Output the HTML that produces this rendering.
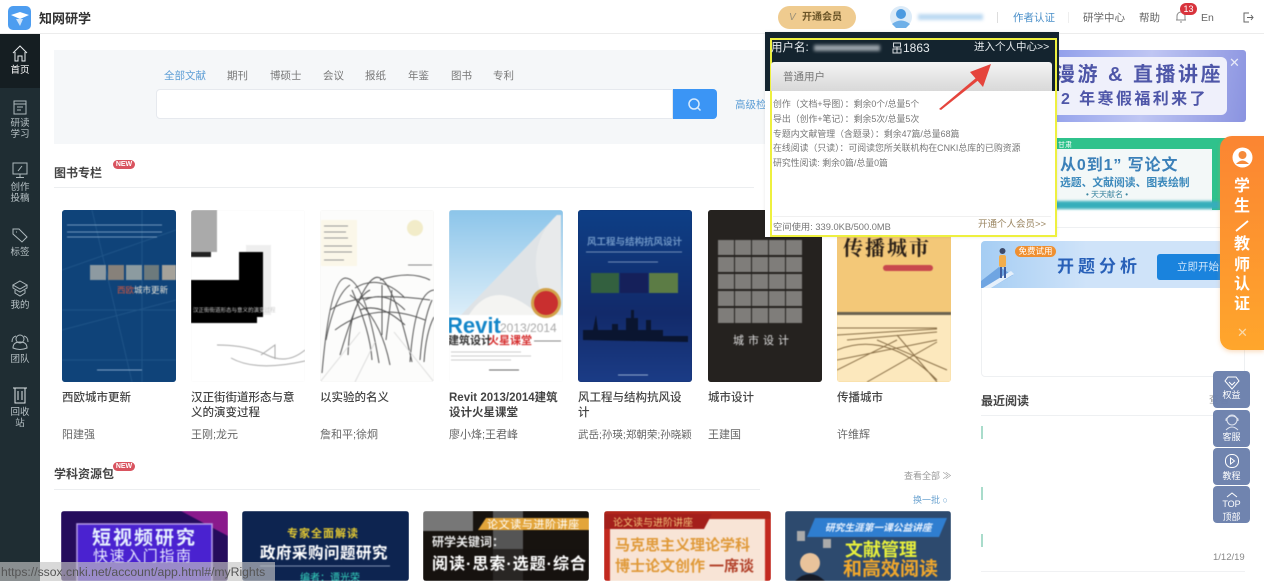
<!DOCTYPE html>
<html lang="zh"><head><meta charset="utf-8"><title>知网研学</title>
<style>
html,body{margin:0;padding:0}
body{width:1264px;height:581px;overflow:hidden;position:relative;background:#fff;font-family:"Liberation Sans","Noto Sans CJK SC",sans-serif;color:#333}
#w{position:absolute;left:0;top:0;width:1264px;height:581px;overflow:hidden;filter:blur(.35px)}
.a{position:absolute;white-space:nowrap}
.b{position:absolute;overflow:hidden;border-radius:3px}
.b svg{display:block;filter:blur(.4px)}
.t{font-size:11.5px;line-height:15px;color:#444;position:absolute;width:112px;font-weight:500}
.au{font-size:11px;line-height:14px;color:#666;position:absolute;white-space:nowrap}
.nav{position:absolute;left:0;width:40px;text-align:center;color:#b9c3c7;font-size:9.5px;line-height:11px}
.nav svg{display:block;margin:0 auto 3px}
.tab{position:absolute;top:69px;font-size:10.5px;line-height:14px;color:#777;white-space:nowrap}
.pl{position:absolute;left:773px;font-size:8.9px;line-height:12px;color:#777;white-space:nowrap}
.fb{position:absolute;left:1213px;width:37px;height:37px;background:#6c81ad;border-radius:4px;color:#fff;text-align:center;font-size:9px;line-height:11px;opacity:.97}
.fb svg{display:block;margin:0 auto}
.or{position:absolute;left:1233px;width:18px;text-align:center;color:#fff;font-size:16px;font-weight:700;line-height:18px}
.new{position:absolute;width:22px;height:9px;border-radius:6px;background:#d9535f;color:#fff;font-size:7px;font-weight:700;line-height:9px;text-align:center}
</style></head><body><div id="w">

<!-- header -->
<div class="a" style="left:0;top:0;width:1264px;height:34px;background:#fff;border-bottom:1px solid #ececec;box-sizing:border-box"></div>
<svg class="a" style="left:8px;top:6px" width="23" height="24" viewBox="0 0 23 24"><rect width="23" height="24" rx="5" fill="#4d9df0"/><path d="M3 9l9-3 9 3-9 4z" fill="#fff"/><path d="M8 13l4 7 3-7z" fill="#cfe4fa"/></svg>
<div class="a" style="left:39px;top:10px;font-size:13px;line-height:17px;font-weight:700;color:#333">知网研学</div>
<div class="a" style="left:778px;top:6px;width:78px;height:23px;border-radius:12px;background:#efcb8f"></div>
<div class="a" style="left:789px;top:11px;font-size:10px;line-height:13px;color:#9a9078;font-style:italic">V</div>
<div class="a" style="left:802px;top:11px;font-size:10px;line-height:13px;font-weight:700;color:#6b5528">开通会员</div>
<svg class="a" style="left:890px;top:6px" width="22" height="22"><circle cx="11" cy="11" r="11" fill="#dcebf8"/><circle cx="11" cy="8" r="5" fill="#4c9ae0"/><path d="M2 18q9-7 18 0l-4 4H6z" fill="#6fb0e8"/></svg>
<div class="a" style="left:918px;top:14px;width:65px;height:6px;background:#bcd9f2;filter:blur(1.5px)"></div>
<div class="a" style="left:997px;top:12px;width:1px;height:11px;background:#ddd"></div>
<div class="a" style="left:1013px;top:11px;font-size:10.5px;line-height:14px;color:#4a8fc9">作者认证</div>
<div class="a" style="left:1068px;top:12px;width:1px;height:11px;background:#eee"></div>
<div class="a" style="left:1083px;top:11px;font-size:10.5px;line-height:14px;color:#666">研学中心</div>
<div class="a" style="left:1139px;top:11px;font-size:10.5px;line-height:14px;color:#666">帮助</div>
<svg class="a" style="left:1175px;top:10px" width="12" height="13" fill="none" stroke="#888"><path d="M2 10V6a4 4 0 018 0v4M1 10h10M5 12h2"/></svg>
<div class="a" style="left:1180px;top:3px;width:17px;height:12px;border-radius:7px;background:#d8333c;color:#fff;font-size:9px;line-height:12px;text-align:center">13</div>
<div class="a" style="left:1201px;top:11px;font-size:10.5px;line-height:14px;color:#666">En</div>
<svg class="a" style="left:1242px;top:11px" width="12" height="13" fill="none" stroke="#666"><path d="M7 2H2v9h5M5 6.5h6M9 4l2 2.5L9 9"/></svg>

<!-- sidebar -->
<div class="a" style="left:0;top:34px;width:40px;height:547px;background:#1f2d33"></div>
<div class="a" style="left:0;top:34px;width:40px;height:54px;background:#151e22"></div>
<div class="nav" style="top:45px;color:#fff"><svg width="16" height="17" fill="none" stroke="#e8ecee"><path d="M1 8l7-7 7 7M3 7v9h3v-5h4v5h3V7"/></svg>首页</div>
<div class="nav" style="top:99px"><svg width="14" height="16" fill="none" stroke="#aeb9bd"><path d="M1 2h12v13H1zM1 5h12M4 8h6M4 11h4"/></svg>研读<br>学习</div>
<div class="nav" style="top:162px"><svg width="16" height="17" fill="none" stroke="#aeb9bd"><path d="M1 1h14v11H1zM8 12v3M4 15.5h8M6 9l4-5"/></svg>创作<br>投稿</div>
<div class="nav" style="top:227px"><svg width="16" height="17" fill="none" stroke="#aeb9bd"><path d="M1 2h6l8 8-5 5-9-8zM4 5h1"/></svg>标签</div>
<div class="nav" style="top:280px"><svg width="16" height="17" fill="none" stroke="#aeb9bd"><path d="M8 1l7 4-7 4-7-4zM1 5v3l7 4 7-4V5M3 10v3l5 3 5-3v-3"/></svg>我的</div>
<div class="nav" style="top:334px"><svg width="18" height="17" fill="none" stroke="#aeb9bd"><circle cx="9" cy="5" r="4"/><path d="M2 14q0-6 7-6t7 6q-7 3-14 0zM5 2Q1 3 1 8M13 2q4 1 4 6"/></svg>团队</div>
<div class="nav" style="top:386px"><svg width="14" height="18" fill="none" stroke="#dfe5e7"><path d="M0 2h14M2 2v15h10V2M5 5v9M9 5v9"/></svg>回收<br>站</div>

<!-- search -->
<div class="a" style="left:54px;top:50px;width:716px;height:94px;background:#f5f7f9"></div>
<div class="tab" style="left:164px;color:#5f9fd6">全部文献</div>
<div class="tab" style="left:227px">期刊</div>
<div class="tab" style="left:270px">博硕士</div>
<div class="tab" style="left:323px">会议</div>
<div class="tab" style="left:365px">报纸</div>
<div class="tab" style="left:408px">年鉴</div>
<div class="tab" style="left:451px">图书</div>
<div class="tab" style="left:493px">专利</div>
<div class="a" style="left:156px;top:89px;width:517px;height:30px;box-sizing:border-box;background:#fff;border:1px solid #e6e9ee;border-radius:4px 0 0 4px"></div>
<div class="a" style="left:673px;top:89px;width:44px;height:30px;background:#3b95f5;border-radius:0 4px 4px 0"></div>
<svg class="a" style="left:687px;top:97px" width="15" height="15" fill="none" stroke="#d7eafd" stroke-width="1.5"><circle cx="7" cy="7" r="5"/><path d="M10.5 10.5l3 3"/></svg>
<div class="a" style="left:735px;top:98px;font-size:10.5px;line-height:14px;color:#5f9fd6">高级检索</div>

<!-- section 1 -->
<div class="a" style="left:54px;top:165px;font-size:12px;line-height:16px;font-weight:700;color:#444">图书专栏</div>
<div class="new" style="left:113px;top:160px">NEW</div>
<div class="a" style="left:54px;top:187px;width:700px;height:1px;background:#eceef0"></div>

<!-- books -->
<div class="b" style="left:62px;top:210px;width:114px;height:172px;background:#124a80"><svg width="114" height="172"><rect width="114" height="172" fill="#0f4379"/><path d="M0 60L114 20M30 0l40 172M0 120l114-30M80 0v172M0 100h114M0 150h114" stroke="#1f5488" fill="none"/><path d="M5 15h95M5 22h95M5 27h90" stroke="#8fb0cf" stroke-width=".8"/><rect x="28" y="55" width="16" height="15" fill="#8d9aa1"/><rect x="46" y="55" width="16" height="15" fill="#87817a"/><rect x="64" y="55" width="16" height="15" fill="#8c9ba0"/><rect x="82" y="55" width="15" height="15" fill="#6d7a7c"/><rect x="100" y="55" width="14" height="15" fill="#a5a29a"/><text x="55" y="83" font-size="8.5" fill="#e8e4d8"><tspan fill="#d4573f">西欧</tspan>城市更新</text><path d="M35 160h45" stroke="#7fa2c4"/></svg></div>
<div class="b" style="left:191px;top:210px;width:114px;height:172px;box-shadow:inset 0 0 0 1px #eee;background:#fff"><svg width="114" height="172"><rect width="114" height="172" fill="#fff"/><rect x="0" y="0" width="26" height="42" fill="#aaa"/><rect x="0" y="42" width="20" height="5" fill="#222"/><rect x="55" y="35" width="25" height="70" fill="#eee"/><path d="M48 42h24v65H66v6H0V70h48z" fill="#000"/><text x="2" y="102" font-size="5.5" fill="#ccc">汉正街街道形态与意义的演变过程</text><path d="M26 135q30 0 50 10t38-5M40 148q25 14 74 3M70 145l14-10v14" stroke="#aaa" fill="none"/></svg></div>
<div class="b" style="left:320px;top:210px;width:114px;height:172px;box-shadow:inset 0 0 0 1px #eee;background:#fff"><svg width="114" height="172"><rect width="114" height="172" fill="#fcfcfb"/><rect x="1" y="10" width="36" height="46" fill="#fbf7e9"/><path d="M4 16h24M4 22h22M4 28h24M4 36h28M4 42h28M4 50h20" stroke="#999"/><circle cx="95" cy="18" r="8" fill="#f2ecc9"/><path d="M88 55h24" stroke="#888"/><g fill="none" stroke="#555"><path d="M2 163Q10 70 25 68q20 0 34 85M20 145Q45 60 60 68t32 84M60 70q30-10 50 0M50 80q-20 10-22 65M90 152q5-70 24-72"/><path d="M10 100q30-20 100-10M15 120q40-30 90-10M30 85q30 20 40 70M6 130Q15 85 30 75M35 78q25-15 50 10M45 90q20-10 40 10M40 100q20-8 45 15M100 150q3-40 12-60M104 152q2-30 10-45M52 150q-2-30-20-70M62 75v50M72 80l-6 50"/></g><path d="M0 172l40-50M114 172l-40-50M35 172l20-40" stroke="#ddd"/></svg></div>
<div class="b" style="left:449px;top:210px;width:114px;height:172px;box-shadow:inset 0 0 0 1px #eee;background:#fff"><svg width="114" height="172"><defs><linearGradient id="s" x1="0" y1="0" x2="0" y2="1"><stop offset="0" stop-color="#8cc5ea"/><stop offset="1" stop-color="#dceef9"/></linearGradient></defs><rect width="114" height="105" fill="url(#s)"/><rect y="105" width="114" height="67" fill="#fff"/><path d="M108 5L12 105h90z" fill="#dfe3e6"/><path d="M108 5Q70 40 100 105h12V5z" fill="#e8eaeb"/><path d="M20 105q25-40 70 0z" fill="#f4f4f2"/><circle cx="97" cy="93" r="15" fill="#d2a24a"/><circle cx="97" cy="93" r="12" fill="#c92f2f"/><text x="-2" y="123" font-size="22" font-weight="700" fill="#1386c9">Revit</text><text x="51" y="122" font-size="12" fill="#aaa">2013/2014</text><text x="-1" y="134" font-size="11" font-weight="700" fill="#333">建筑设计</text><text x="39" y="134" font-size="11" font-weight="700" fill="#d63030">火星课堂</text><path d="M85 131h27" stroke="#888"/><path d="M2 142h70M2 146h80M2 150h60" stroke="#999" stroke-width=".6"/><path d="M40 160h30" stroke="#666"/></svg></div>
<div class="b" style="left:578px;top:210px;width:114px;height:172px;background:#0f2a63"><svg width="114" height="172"><defs><linearGradient id="w2" x1="0" y1="0" x2="0" y2="1"><stop offset="0" stop-color="#0e3f86"/><stop offset=".6" stop-color="#122a6a"/><stop offset="1" stop-color="#1b3c86"/></linearGradient></defs><rect width="114" height="172" fill="url(#w2)"/><text x="9" y="35" font-size="9.5" font-weight="700" fill="#6d94c4">风工程与结构抗风设计</text><path d="M8 42h96M30 52h50" stroke="#8fa8cc" stroke-width=".7"/><rect x="13" y="63" width="28" height="20" fill="#33603f"/><rect x="42" y="63" width="28" height="20" fill="#15205a"/><rect x="71" y="63" width="29" height="20" fill="#5c7c45"/><path d="M5 130v-10h10l3-15 2 15h14v-6h6v6h8v-12h5v-8h3v8h4v12h8v-10h5v10h12v6h25v6z" fill="#0a1530"/><path d="M35 175h40" stroke="#8fa8cc"/><path d="M40 165h30" stroke="#8fa8cc"/></svg></div>
<div class="b" style="left:708px;top:210px;width:114px;height:172px;background:#262321"><svg width="114" height="172"><rect width="114" height="172" fill="#25221f"/><g fill="#7f7d7a" transform="translate(-5,0)"><rect x="15" y="30" width="16" height="15"/><rect x="32" y="30" width="16" height="15"/><rect x="49" y="30" width="16" height="15"/><rect x="66" y="30" width="16" height="15"/><rect x="83" y="30" width="16" height="15"/><rect x="15" y="47" width="16" height="15"/><rect x="32" y="47" width="16" height="15"/><rect x="49" y="47" width="16" height="15"/><rect x="66" y="47" width="16" height="15"/><rect x="83" y="47" width="16" height="15"/><rect x="15" y="64" width="16" height="15"/><rect x="32" y="64" width="16" height="15"/><rect x="49" y="64" width="16" height="15"/><rect x="66" y="64" width="16" height="15"/><rect x="83" y="64" width="16" height="15"/><rect x="15" y="81" width="16" height="15"/><rect x="32" y="81" width="16" height="15"/><rect x="49" y="81" width="16" height="15"/><rect x="66" y="81" width="16" height="15"/><rect x="83" y="81" width="16" height="15"/><rect x="15" y="98" width="16" height="15"/><rect x="32" y="98" width="16" height="15"/><rect x="49" y="98" width="16" height="15"/><rect x="66" y="98" width="16" height="15"/><rect x="83" y="98" width="16" height="15"/></g><text x="25" y="134" font-size="11" fill="#ddd" letter-spacing="4">城市设计</text></svg></div>
<div class="b" style="left:837px;top:210px;width:114px;height:172px;background:#f3c979"><svg width="114" height="172"><rect width="114" height="172" fill="#f3c878"/><rect y="103" width="114" height="69" fill="#fce8bd"/><rect y="102" width="114" height="3" fill="#6b6350"/><text x="6" y="45" font-size="20" fill="#2a2018" font-family="Noto Serif CJK SC,serif" font-weight="700" letter-spacing="2">传播城市</text><rect x="46" y="55" width="50" height="6" rx="3" fill="#c8474d"/><g fill="none" stroke="#8a7048"><path d="M0 125l100-6M0 140q50-20 100 30M0 160l60-30M30 172l70-40M40 130l70 30M60 125l40 47M0 118h100M10 130l90-8M0 150l100-20"/></g></svg></div>

<div class="t" style="left:62px;top:391px">西欧城市更新</div>
<div class="t" style="left:191px;top:391px">汉正街街道形态与意义的演变过程</div>
<div class="t" style="left:320px;top:391px">以实验的名义</div>
<div class="t" style="left:449px;top:391px;font-weight:700">Revit 2013/2014建筑设计火星课堂</div>
<div class="t" style="left:578px;top:391px">风工程与结构抗风设计</div>
<div class="t" style="left:708px;top:391px">城市设计</div>
<div class="t" style="left:837px;top:391px">传播城市</div>
<div class="au" style="left:62px;top:428px">阳建强</div>
<div class="au" style="left:191px;top:428px">王刚;龙元</div>
<div class="au" style="left:320px;top:428px">詹和平;徐炯</div>
<div class="au" style="left:449px;top:428px">廖小烽;王君峰</div>
<div class="au" style="left:578px;top:428px;font-size:10.5px">武岳;孙瑛;郑朝荣;孙晓颖</div>
<div class="au" style="left:708px;top:428px">王建国</div>
<div class="au" style="left:837px;top:428px">许维辉</div>

<!-- section 2 -->
<div class="a" style="left:54px;top:466px;font-size:12px;line-height:16px;font-weight:700;color:#444">学科资源包</div>
<div class="new" style="left:113px;top:462px">NEW</div>
<div class="a" style="left:54px;top:489px;width:706px;height:1px;background:#eceef0"></div>
<div class="a" style="left:904px;top:470px;font-size:9px;line-height:12px;color:#999">查看全部 ≫</div>
<div class="a" style="left:913px;top:494px;font-size:9px;line-height:12px;color:#6ba3d0">换一批 ○</div>

<div class="b" style="left:61px;top:511px;width:167px;height:70px"><svg width="167" height="70"><rect width="167" height="70" fill="#250c5c"/><path d="M120 0h47v25z" fill="#8a1a8c"/><path d="M16 13h135v60H16z" fill="#4a22d0" stroke="#b59be8" stroke-width="1.5"/><text x="31" y="33" font-size="19" font-weight="700" fill="#e6f0ff" letter-spacing="2">短视频研究</text><text x="32" y="50" font-size="15" fill="#e6e8ff" letter-spacing="1.6">快速入门指南</text></svg></div>
<div class="b" style="left:242px;top:511px;width:167px;height:70px"><svg width="167" height="70"><rect width="167" height="70" fill="#0d2450"/><text x="45" y="26" font-size="11" font-weight="700" fill="#e3c832" letter-spacing="1">专家全面解读</text><text x="18" y="47" font-size="15.5" font-weight="700" fill="#fff" letter-spacing=".5">政府采购问题研究</text><path d="M18 55h130" stroke="#7f8fb0"/><text x="58" y="70" font-size="10" fill="#35d6c0">编者：谭光荣</text></svg></div>
<div class="b" style="left:423px;top:511px;width:166px;height:70px"><svg width="166" height="70"><rect width="166" height="70" fill="#17130f"/><rect x="0" y="0" width="50" height="20" fill="#777"/><rect x="70" y="0" width="30" height="70" fill="#555"/><rect x="0" y="38" width="166" height="32" fill="#17130f" opacity=".7"/><path d="M55 19l8-12h103v12z" fill="#e3a53a"/><text x="64" y="17" font-size="11" fill="#fff" letter-spacing=".6">论文读与进阶讲座</text><text x="9" y="35" font-size="12" font-weight="700" fill="#e8e8e8">研学关键词：</text><text x="9" y="58" font-size="16" font-weight="700" fill="#fff" letter-spacing="1">阅读·思索·选题·综合</text></svg></div>
<div class="b" style="left:604px;top:511px;width:167px;height:70px"><svg width="167" height="70"><rect width="167" height="70" fill="#c2291f"/><rect x="6" y="8" width="155" height="62" fill="#f8e4d6"/><path d="M0 0h167v8H0z" fill="#b0261b"/><path d="M0 3h108l-8 15H0z" fill="#a41f1b"/><text x="9" y="15" font-size="10" fill="#f3c37a">论文读与进阶讲座</text><text x="11" y="39" font-size="15" font-weight="700" fill="#e09a3a">马克思主义理论学科</text><text x="11" y="60" font-size="15" font-weight="700" fill="#e09a3a">博士论文创作</text><text x="105" y="60" font-size="15" font-weight="700" fill="#b3432c">一席谈</text></svg></div>
<div class="b" style="left:785px;top:511px;width:166px;height:70px"><svg width="166" height="70"><rect width="166" height="70" fill="#2d4a6e"/><path d="M30 7h132l-8 19H22z" fill="#2f7ed0"/><text x="40" y="20" font-size="9.7" font-weight="700" font-style="italic" fill="#e8f2ff">研究生涯第一课公益讲座</text><text x="60" y="45" font-size="18" font-weight="700" fill="#e7ef3c">文献管理</text><text x="58" y="64" font-size="19" font-weight="700" fill="#f0a72c">和高效阅读</text><circle cx="25" cy="52" r="10" fill="#e9c39b"/><path d="M8 72q17-18 34 0z" fill="#161b27"/><rect x="12" y="20" width="8" height="10" fill="#aaa"/><rect x="38" y="28" width="8" height="9" fill="#aaa"/></svg></div>

<!-- right column -->
<div class="a" style="left:1046px;top:50px;width:200px;height:72px;border-radius:3px;background:linear-gradient(100deg,#8c9bea,#bfc6f3 50%,#8a93e0)"></div>
<div class="a" style="left:1050px;top:57px;width:177px;height:58px;border-radius:6px;background:#eff0fb"></div>
<div class="a" style="left:1055px;top:62px;font-size:20px;line-height:26px;font-weight:700;color:#4e56a8;letter-spacing:2.5px">漫游 &amp; 直播讲座</div>
<div class="a" style="left:1061px;top:89px;font-size:16px;line-height:22px;font-weight:700;color:#4e56a8;letter-spacing:2.4px">2 年寒假福利来了</div>
<div class="a" style="left:1229px;top:55px;font-size:13px;line-height:15px;color:#e8eaf8">✕</div>

<div class="a" style="left:1046px;top:138px;width:180px;height:72px;background:#2fc28c"></div>
<div class="a" style="left:1058px;top:141px;font-size:7px;line-height:9px;color:#fff">甘肃</div>
<div class="a" style="left:1052px;top:149px;width:160px;height:61px;background:#f3f8f8"></div>
<div class="a" style="left:1060px;top:155px;font-size:16px;line-height:22px;font-weight:700;color:#3b80b8;letter-spacing:.9px">从0到1” 写论文</div>
<div class="a" style="left:1060px;top:176px;font-size:10.8px;line-height:15px;font-weight:700;color:#3a88bb">选题、文献阅读、图表绘制</div>
<div class="a" style="left:1086px;top:189px;font-size:8px;line-height:11px;color:#3c86a0">• 天天献名 •</div>
<div class="a" style="left:1052px;top:201px;width:168px;height:8px;background:#36aebb;filter:blur(1.2px)"></div>
<div class="a" style="left:1057px;top:227px;width:188px;height:1px;background:#eef0f2"></div>

<div class="a" style="left:981px;top:241px;width:264px;height:136px;box-sizing:border-box;border:1px solid #eef0f2;border-radius:4px;background:#fff"></div>
<div class="a" style="left:981px;top:241px;width:264px;height:47px;background:linear-gradient(90deg,#a5cdf3,#cfe3f9 40%,#cfe3f9);border-radius:4px 4px 0 0"></div>
<svg class="a" style="left:981px;top:241px" width="50" height="47"><path d="M0 40L18 26l14 8-22 13H0z" fill="#6fa5e2"/><path d="M2 47L30 30l3 3L10 47z" fill="#e6f0fb"/><rect x="18" y="14" width="7" height="12" rx="2" fill="#f2ad4b"/><circle cx="21.500" cy="10" r="3" fill="#3c4a6a"/><rect x="19" y="26" width="2" height="11" fill="#3d5da0"/><rect x="23" y="26" width="2" height="11" fill="#3d5da0"/></svg>
<div class="a" style="left:1015px;top:246px;width:41px;height:11px;border-radius:6px;background:#ef8f30;color:#fff;font-size:8.5px;line-height:11px;text-align:center">免费试用</div>
<div class="a" style="left:1057px;top:255px;font-size:17px;line-height:23px;font-weight:700;color:#2860b8;letter-spacing:4px">开题分析</div>
<div class="a" style="left:1157px;top:254px;width:69px;height:26px;background:#1a83dd;border-radius:3px 0 0 3px;color:#cfe6fb;font-size:10.5px;line-height:26px;padding-left:20px;box-sizing:border-box">立即开始</div>

<div class="a" style="left:981px;top:393px;font-size:12px;line-height:16px;font-weight:700;color:#444">最近阅读</div>
<div class="a" style="left:1209px;top:395px;font-size:10px;line-height:12px;color:#999">查看</div>
<div class="a" style="left:981px;top:415px;width:264px;height:1px;background:#eef0f2"></div>
<div class="a" style="left:981px;top:426px;width:2px;height:13px;background:#a9dccb"></div>
<div class="a" style="left:981px;top:487px;width:2px;height:13px;background:#a9dccb"></div>
<div class="a" style="left:981px;top:534px;width:2px;height:13px;background:#a9dccb"></div>
<div class="a" style="left:1213px;top:552px;font-size:9.5px;line-height:12px;color:#888">1/12/19</div>
<div class="a" style="left:981px;top:571px;width:264px;height:1px;background:#f0f1f3"></div>

<!-- orange tab -->
<div class="a" style="left:1220px;top:136px;width:44px;height:214px;border-radius:12px 0 0 12px;background:linear-gradient(180deg,#fb8532,#ffa62c);box-shadow:0 2px 4px rgba(240,150,60,.3)"></div>
<svg class="a" style="left:1232px;top:147px" width="21" height="21"><circle cx="10.5" cy="10.5" r="10" fill="#fff"/><circle cx="10.5" cy="8" r="4" fill="#f58a3a"/><path d="M4 17q6.5-7 13 0z" fill="#f58a3a"/></svg>
<div class="or" style="top:178px">学</div>
<div class="or" style="top:198px">生</div>
<svg class="a" style="left:1235px;top:220px" width="14" height="12"><path d="M1 11L13 1" stroke="#fff" stroke-width="1.800"/></svg>
<div class="or" style="top:236px">教</div>
<div class="or" style="top:257px">师</div>
<div class="or" style="top:276px">认</div>
<div class="or" style="top:296px">证</div>
<div class="a" style="left:1237px;top:325px;font-size:13px;line-height:15px;color:#fbd9a8">✕</div>

<!-- float buttons -->
<div class="fb" style="top:371px"><svg style="margin-top:4px" width="16" height="15" fill="none" stroke="#fff"><path d="M4 2h8l3 4-7 8-7-8zM5 7l3 3 3-3"/></svg>权益</div>
<div class="fb" style="top:410px"><svg width="16" height="19" style="margin-top:3px" fill="none" stroke="#dde3ef"><circle cx="8" cy="7" r="5"/><path d="M2 8V6q6-6 12 0v2M2 17q6-6 12 0"/></svg>客服</div>
<div class="fb" style="top:448px"><svg style="margin-top:5px" width="16" height="16" fill="none" stroke="#fff"><rect x="1.500" y="1.500" width="13" height="13" rx="6"/><path d="M6.500 5l4 3-4 3z"/></svg><div style="margin-top:2px">教程</div></div>
<div class="fb" style="top:486px"><svg style="margin-top:6px" width="12" height="6" fill="none" stroke="#fff"><path d="M1 5l5-4 5 4"/></svg><div style="margin-top:1px">TOP<br><span style="line-height:14px">顶部</span></div></div>

<!-- popup -->
<div class="a" style="left:765px;top:32px;width:292px;height:205px;background:#fff;box-shadow:0 0 3px rgba(0,0,0,.1)"></div>
<div class="a" style="left:765px;top:32px;width:294px;height:59px;background:#14242f"></div>
<div class="a" style="left:770px;top:38px;width:287px;height:199px;box-sizing:border-box;border:2px solid #eef03f"></div>
<div class="a" style="left:771px;top:41px;font-size:11.5px;line-height:15px;color:#e8edf0">用户名:</div>
<div class="a" style="left:814px;top:45px;width:66px;height:6px;background:#9aa3aa;filter:blur(1.5px)"></div>
<svg class="a" style="left:892px;top:42px" width="10" height="12" fill="none" stroke="#d5dade"><path d="M1.500 1h7v4h-7zM1 7h8v4H1zM5 5v6"/></svg>
<div class="a" style="left:903px;top:41px;font-size:12px;line-height:15px;color:#e8edf0">1863</div>
<div class="a" style="left:974px;top:40px;font-size:10.5px;line-height:14px;color:#e8edf0">进入个人中心&gt;&gt;</div>
<div class="a" style="left:771px;top:62px;width:281px;height:29px;border-radius:3px 3px 0 0;background:linear-gradient(180deg,#f4f4f4,#d8d8d8)"></div>
<div class="a" style="left:783px;top:70px;font-size:10.5px;line-height:14px;color:#777">普通用户</div>
<div class="pl" style="top:98px">创作（文档+导图）：剩余0个/总量5个</div>
<div class="pl" style="top:113px">导出（创作+笔记）：剩余5次/总量5次</div>
<div class="pl" style="top:128px">专题内文献管理（含题录）：剩余47篇/总量68篇</div>
<div class="pl" style="top:142px">在线阅读（只读）：可阅读您所关联机构在CNKI总库的已购资源</div>
<div class="pl" style="top:157px">研究性阅读: 剩余0篇/总量0篇</div>
<div class="a" style="left:773px;top:216px;width:278px;height:1px;background:#f0f0f0"></div>
<div class="pl" style="top:221px;font-size:9.3px">空间使用: 339.0KB/500.0MB</div>
<div class="a" style="left:978px;top:218px;font-size:9.5px;line-height:13px;color:#9a8560">开通个人会员&gt;&gt;</div>
<svg class="a" style="left:935px;top:60px" width="60" height="52"><path d="M4 49L41 18l2 2.500L6 50z" fill="#e5443c"/><path d="M56 4L35 12l13 15z" fill="#e5443c"/></svg>

<!-- status bar -->
<div class="a" style="left:0;top:562px;width:275px;height:19px;background:rgba(196,196,196,.65);font-size:12.2px;line-height:20px;color:#555;padding-left:1px;box-sizing:border-box;overflow:hidden">https://ssox.cnki.net/account/app.html#/myRights</div>
</div></body></html>
